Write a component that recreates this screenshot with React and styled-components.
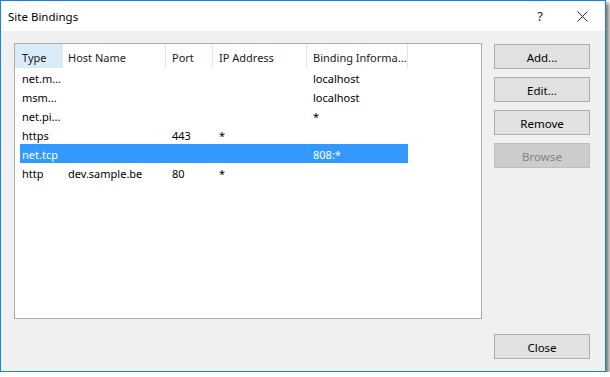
import React from "react";
import styled, { createGlobalStyle } from "styled-components";

const GlobalStyle = createGlobalStyle`
  html, body {
    margin: 0;
    padding: 0;
    background: #ffffff;
  }
  body {
    font-family: "Noto Sans", "Open Sans", sans-serif;
    font-size: 11px;
    color: #000;
  }
`;

const Window = styled.div`
  box-sizing: border-box;
  width: 606px;
  height: 372px;
  border: 1px solid #1883d7;
  background: #f0f0f0;
  box-shadow: 3px 3px 4px rgba(0, 0, 0, 0.55);
  display: flex;
  flex-direction: column;
`;

const TitleBar = styled.div`
  height: 30px;
  background: #ffffff;
  display: flex;
  align-items: center;
  padding-left: 7px;
`;

const Title = styled.div`
  flex: 1;
  font-size: 11.5px;
`;

const CaptionButton = styled.div`
  width: ${(p) => p.$w}px;
  height: 30px;
  display: flex;
  align-items: center;
  justify-content: center;
  font-size: 13px;
  color: #222;
`;

const Body = styled.div`
  flex: 1;
  display: grid;
  grid-template-columns: 468px 96px;
  column-gap: 12px;
  padding: 12px 14px 12px 13px;
`;

const ListBox = styled.div`
  box-sizing: border-box;
  height: 276px;
  border: 1px solid #adadad;
  background: #ffffff;
`;

const HeaderRow = styled.div`
  display: flex;
  height: 24px;
`;

const HeaderCell = styled.div`
  box-sizing: border-box;
  width: ${(p) => p.$w}px;
  padding-left: ${(p) => p.$pad}px;
  padding-top: 3px;
  line-height: 21px;
  border-right: 1px solid #e5e5e5;
  background: ${(p) => (p.$hot ? "#d9ebf9" : "transparent")};
  color: #1a1a1a;
  white-space: nowrap;
  overflow: hidden;
`;

const Row = styled.div`
  display: flex;
  margin-left: 5px;
  width: 388px;
  height: 19px;
  background: ${(p) => (p.$selected ? "#3399ff" : "transparent")};
  color: ${(p) => (p.$selected ? "#ffffff" : "#000000")};
`;

const Cell = styled.div`
  box-sizing: border-box;
  width: ${(p) => p.$w}px;
  height: 19px;
  padding-left: ${(p) => p.$pad}px;
  padding-top: 3px;
  line-height: 16px;
  white-space: nowrap;
  overflow: hidden;
`;

const ButtonColumn = styled.div`
  display: flex;
  flex-direction: column;
  gap: 8px;
  padding-top: 1px;
`;

const Button = styled.div`
  box-sizing: border-box;
  height: 25px;
  border: 1px solid ${(p) => (p.$disabled ? "#bfbfbf" : "#adadad")};
  background: ${(p) => (p.$disabled ? "#cccccc" : "#e1e1e1")};
  color: ${(p) => (p.$disabled ? "#838383" : "#000000")};
  display: flex;
  align-items: center;
  justify-content: center;
  font-size: 11.5px;
  padding-top: 1px;
`;

const CloseButton = styled(Button)`
  margin-top: auto;
`;

const columns = [
  { title: "Type", head: 48, headPad: 7, cell: 43, cellPad: 2 },
  { title: "Host Name", head: 103, headPad: 5, cell: 103, cellPad: 5 },
  { title: "Port", head: 47, headPad: 6, cell: 47, cellPad: 6 },
  { title: "IP Address", head: 94, headPad: 6, cell: 94, cellPad: 6 },
  { title: "Binding Informa...", head: 101, headPad: 6, cell: 101, cellPad: 6 },
];

const rows = [
  ["net.m...", "", "", "", "localhost"],
  ["msm...", "", "", "", "localhost"],
  ["net.pi...", "", "", "", "*"],
  ["https", "", "443", "*", ""],
  ["net.tcp", "", "", "", "808:*"],
  ["http", "dev.sample.be", "80", "*", ""],
];

const CloseIcon = () => (
  <svg width="11" height="11" viewBox="0 0 11 11">
    <path d="M0.5 0.5 L10.5 10.5 M10.5 0.5 L0.5 10.5" stroke="#222" strokeWidth="1" />
  </svg>
);

export default function App() {
  return (
    <>
      <GlobalStyle />
      <Window>
        <TitleBar>
          <Title>Site Bindings</Title>
          <CaptionButton $w={38}>?</CaptionButton>
          <CaptionButton $w={46}>
            <CloseIcon />
          </CaptionButton>
        </TitleBar>
        <Body>
          <ListBox>
            <HeaderRow>
              {columns.map((c, i) => (
                <HeaderCell key={c.title} $w={c.head} $pad={c.headPad} $hot={i === 0}>
                  {c.title}
                </HeaderCell>
              ))}
            </HeaderRow>
            {rows.map((r, ri) => (
              <Row key={ri} $selected={ri === 4}>
                {r.map((v, ci) => (
                  <Cell key={ci} $w={columns[ci].cell} $pad={columns[ci].cellPad}>
                    {v}
                  </Cell>
                ))}
              </Row>
            ))}
          </ListBox>
          <ButtonColumn>
            <Button>Add...</Button>
            <Button>Edit...</Button>
            <Button>Remove</Button>
            <Button $disabled>Browse</Button>
            <CloseButton>Close</CloseButton>
          </ButtonColumn>
        </Body>
      </Window>
    </>
  );
}
